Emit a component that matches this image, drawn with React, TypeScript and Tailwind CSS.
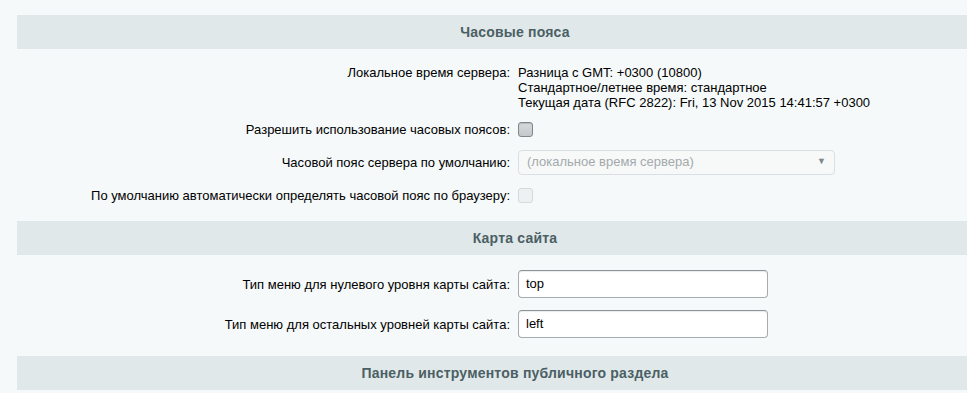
import React from 'react';

const font = { fontFamily: '"Liberation Sans", Arial, sans-serif' };

const Header = ({ title }: { title: string }) => (
  <div className="h-[34px] bg-[#e0e8ea] flex items-center justify-center text-[14px] tracking-[0.2px] font-bold text-[#4b5f64]">
    {title}
  </div>
);

const Row = ({ label, h, children, top }: { label: string; h: string; children: React.ReactNode; top?: boolean }) => (
  <div className={`grid grid-cols-2 ${h} ${top ? 'items-start' : 'items-center'}`}>
    <div className="text-right pr-[5px] text-[13px] leading-[15px] text-black">{label}</div>
    <div className="pl-[3px] flex items-center">{children}</div>
  </div>
);

const Checkbox = ({ disabled }: { disabled?: boolean }) =>
  disabled ? (
    <span className="block w-[15px] h-[15px] rounded-[3px] border border-[#d4d9db] bg-[#eef1f2]" />
  ) : (
    <span className="block w-[15px] h-[15px] rounded-[3px] border border-[#80868a] bg-gradient-to-b from-[#d6dadc] to-[#c3c8cb] shadow-[inset_0_1px_1px_rgba(0,0,0,0.15)]" />
  );

const TextInput = ({ value }: { value: string }) => (
  <div className="w-[250px] h-[28px] rounded-[4px] border border-[#a5abae] border-t-[#8d9397] bg-white shadow-[inset_0_1px_1px_rgba(0,0,0,0.08)] flex items-center pl-[7px] text-[13px] text-black">
    {value}
  </div>
);

export default function App() {
  return (
    <div className="w-full h-[393px] overflow-hidden bg-[#f5f9f9]" style={font}>
      <div className="ml-[17px] w-[996px] pt-[15px]">
        <Header title="Часовые пояса" />
        <div className="pt-[16px]">
          <Row label="Локальное время сервера:" h="h-[47px]" top>
            <div className="text-[13px] leading-[15px] text-black">
              <div>Разница с GMT: +0300 (10800)</div>
              <div>Стандартное/летнее время: стандартное</div>
              <div>Текущая дата (RFC 2822): Fri, 13 Nov 2015 14:41:57 +0300</div>
            </div>
          </Row>
          <Row label="Разрешить использование часовых поясов:" h="h-[34px]">
            <Checkbox />
          </Row>
          <Row label="Часовой пояс сервера по умолчанию:" h="h-[32px]">
            <div className="w-[317px] h-[25px] rounded-[4px] border border-[#dadfe1] bg-[#f7f9f9] flex items-center justify-between pl-[8px] pr-[8px] text-[13px] text-[#a4a9ac]">
              <span>(локальное время сервера)</span>
              <span className="text-[9px] text-[#80868a]">▼</span>
            </div>
          </Row>
          <Row label="По умолчанию автоматически определять часовой пояс по браузеру:" h="h-[34px]">
            <Checkbox disabled />
          </Row>
        </div>
        <div className="h-[9px]" />
        <Header title="Карта сайта" />
        <div className="pt-[15px] pb-[18px] flex flex-col gap-[12px]">
          <Row label="Тип меню для нулевого уровня карты сайта:" h="h-[28px]">
            <TextInput value="top" />
          </Row>
          <Row label="Тип меню для остальных уровней карты сайта:" h="h-[28px]">
            <TextInput value="left" />
          </Row>
        </div>
        <Header title="Панель инструментов публичного раздела" />
      </div>
    </div>
  );
}
